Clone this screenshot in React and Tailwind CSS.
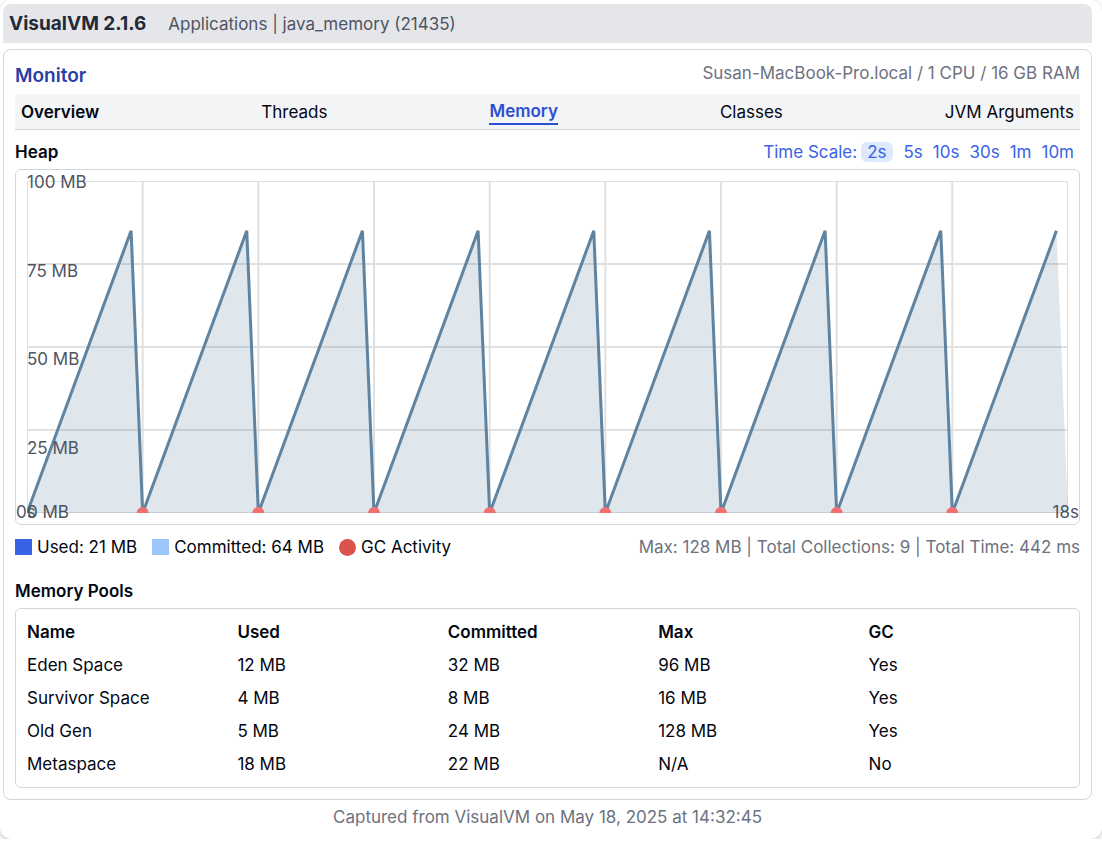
import React from "react";

const TABS = ["Overview", "Threads", "Memory", "Classes", "JVM Arguments"];
const SCALES = ["2s", "5s", "10s", "30s", "1m", "10m"];
const POOLS = [
  ["Eden Space", "12 MB", "32 MB", "96 MB", "Yes"],
  ["Survivor Space", "4 MB", "8 MB", "16 MB", "Yes"],
  ["Old Gen", "5 MB", "24 MB", "128 MB", "Yes"],
  ["Metaspace", "18 MB", "22 MB", "N/A", "No"],
];

const W = 1040;
const H = 332;
const CYCLES = 9;
const STEP = W / CYCLES;
const PEAK = H * 0.15;

const points = Array.from({ length: CYCLES }, (_, i) => [
  `${i * STEP},${H}`,
  `${(i + 0.9) * STEP},${PEAK}`,
]).flat();
const line = `M${points.join("L")}`;

function HeapChart() {
  return (
    <svg
      className="block h-[332px] w-full"
      viewBox={`0 0 ${W} ${H}`}
      preserveAspectRatio="none"
      role="img"
      aria-label="Heap usage over time"
    >
      <g stroke="#e0e0e0" strokeWidth="2">
        {Array.from({ length: CYCLES + 1 }, (_, i) => (
          <line key={i} x1={i * STEP} x2={i * STEP} y1="0" y2={H} />
        ))}
        {[0, 1, 2, 3, 4].map((i) => (
          <line key={i} x1="0" x2={W} y1={(i * H) / 4} y2={(i * H) / 4} />
        ))}
      </g>
      <path d={`${line}L${W},${H}Z`} fill="#5f84a2" fillOpacity="0.2" />
      <path d={line} fill="none" stroke="#5f84a2" strokeWidth="3" />
      {Array.from({ length: CYCLES - 1 }, (_, i) => (
        <circle key={i} cx={(i + 1) * STEP} cy={H} r="6" fill="#f07070" />
      ))}
    </svg>
  );
}

export default function App() {
  return (
    <main className="rounded-xl bg-white pt-1 pr-[10px] pb-[10px] pl-[3px] font-['Inter',sans-serif] text-[17px] leading-6 text-gray-950 shadow-[0_2px_6px_rgba(0,0,0,0.22)]">
      <header className="flex items-center gap-[22px] rounded-t-lg bg-[#e5e6ea] px-[6px] pt-2 pb-[7px]">
        <h1 className="text-[19px] font-bold text-[#222a37]">VisualVM 2.1.6</h1>
        <span className="text-[#4d5562]">Applications | java_memory (21435)</span>
      </header>

      <section className="mt-[6px] rounded-lg border border-gray-300 p-[11px]">
        <div className="flex justify-between">
          <h2 className="text-[19px] leading-[30px] font-semibold text-[#2940a9]">Monitor</h2>
          <span className="text-[#6d7280]">Susan-MacBook-Pro.local / 1 CPU / 16 GB RAM</span>
        </div>

        <nav className="mt-[3px] flex h-9 items-center justify-between border-b border-gray-300 bg-[#f3f4f6] px-[6px]">
          {TABS.map((t) => (
            <a
              key={t}
              href="#"
              className={
                t === "Memory"
                  ? "border-b-2 border-[#2d4fd1] font-semibold text-[#2d4fd1]"
                  : t === "Overview"
                    ? "font-semibold"
                    : ""
              }
            >
              {t}
            </a>
          ))}
        </nav>

        <div className="mt-[10px] flex items-center justify-between">
          <h3 className="font-semibold">Heap</h3>
          <div className="flex items-center text-[#3963e6]">
            <span className="mr-1">Time Scale:</span>
            {SCALES.map((s) => (
              <button
                key={s}
                type="button"
                className={
                  s === "2s"
                    ? "mr-[6px] h-5 rounded-md bg-[#dee9fb] px-[6px] leading-5"
                    : "px-[5px] leading-5 last:pr-[6px]"
                }
              >
                {s}
              </button>
            ))}
          </div>
        </div>

        <div className="relative mt-[5px] rounded-md border border-gray-300 p-[11px] text-[#4d5562]">
          <HeapChart />
          <span className="absolute top-0 left-[11px]">100 MB</span>
          <span className="absolute top-1/4 left-[11px]">75 MB</span>
          <span className="absolute top-2/4 left-[11px]">50 MB</span>
          <span className="absolute top-3/4 left-[11px]">25 MB</span>
          <span className="absolute bottom-0 left-[11px]">0 MB</span>
          <span className="absolute bottom-0 left-0">0s</span>
          <span className="absolute right-0 bottom-0">18s</span>
        </div>

        <div className="mt-[10px] flex items-center justify-between">
          <div className="flex items-center gap-[15px]">
            <span className="flex items-center gap-[5px]">
              <i className="h-4 w-[17px] bg-[#3963e6]" />
              Used: 21 MB
            </span>
            <span className="flex items-center gap-[5px]">
              <i className="h-4 w-[17px] bg-[#9ec5fa]" />
              Committed: 64 MB
            </span>
            <span className="flex items-center gap-[5px]">
              <i className="size-[17px] rounded-full bg-[#dc524d]" />
              GC Activity
            </span>
          </div>
          <span className="text-[#6d7280]">Max: 128 MB | Total Collections: 9 | Total Time: 442 ms</span>
        </div>

        <h3 className="mt-5 font-semibold">Memory Pools</h3>
        <div className="mt-[5px] rounded-md border border-gray-300 p-[11px]">
          <table className="block w-full">
            <thead className="block">
              <tr className="grid grid-cols-5 gap-[11px] pb-[9px]">
                {["Name", "Used", "Committed", "Max", "GC"].map((h) => (
                  <th key={h} className="text-left font-semibold">
                    {h}
                  </th>
                ))}
              </tr>
            </thead>
            <tbody className="grid gap-[9px]">
              {POOLS.map((row) => (
                <tr key={row[0]} className="grid grid-cols-5 gap-[11px]">
                  {row.map((c, i) => (
                    <td key={i}>{c}</td>
                  ))}
                </tr>
              ))}
            </tbody>
          </table>
        </div>
      </section>

      <footer className="mt-[5px] text-center text-[#6d7280]">
        Captured from VisualVM on May 18, 2025 at 14:32:45
      </footer>
    </main>
  );
}
